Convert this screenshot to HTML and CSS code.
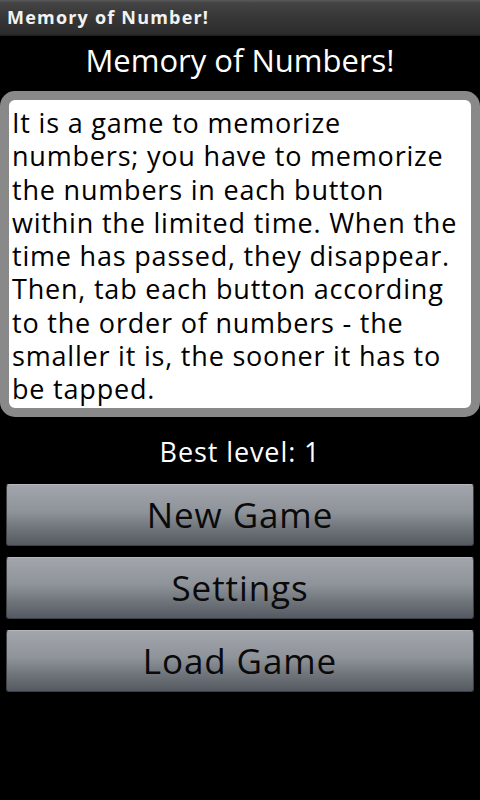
FILE: index.html
```html
<!DOCTYPE html>
<html>
<head>
    <title>Memory of Number!</title>
    <link rel="stylesheet" href="styles.css">
</head>
<body>
    <div class="titlebar">Memory of Number!</div>
    <div id="container">
        <h1 class="heading">Memory of Numbers!</h1>
        <div class="intro">
            <p>It is a game to memorize numbers; you have to memorize the numbers in each button within the limited time. When the time has passed, they disappear. Then, tab each button according to the order of numbers - the smaller it is, the sooner it has to be tapped.</p>
        </div>
        <p class="best">Best level: <span id="bestLevel">1</span></p>
        <div class="menu">
            <button class="menu-btn">New Game</button>
            <button class="menu-btn">Settings</button>
            <button class="menu-btn">Load Game</button>
        </div>
    </div>
</body>
</html>
```

FILE: styles.css
```css
body {
    margin: 0;
    background-color: #000;
    color: #fff;
    font-family: "Open Sans", "Noto Sans", sans-serif;
}

/* 窗口标题栏 */
.titlebar {
    height: 36px;
    padding-left: 7px;
    line-height: 35px;
    font-size: 18px;
    font-weight: bold;
    letter-spacing: 1.2px;
    color: #f2f2f2;
    background: linear-gradient(#5a5a5a 0, #434343 3px, #353535 20px, #2c2c2c 34px, #1a1a1a 36px);
}

.heading {
    margin: 0;
    height: 55px;
    line-height: 48px;
    font-size: 31px;
    font-weight: normal;
    text-align: center;
}

/* 说明文字框 */
.intro {
    background-color: #fff;
    border: 9px solid #898989;
    border-radius: 15px;
    padding: 6px 3px 2px 3px;
}

.intro p {
    margin: 0;
    color: #000;
    font-size: 27px;
    line-height: 33.3px;
    letter-spacing: 0.8px;
}

.best {
    margin: 0;
    height: 67px;
    line-height: 70px;
    font-size: 27px;
    letter-spacing: 0.9px;
    text-align: center;
}

.menu {
    display: flex;
    flex-direction: column;
    gap: 11px;
    padding: 0 6px;
}

.menu-btn {
    height: 62px;
    border: 1px solid #3c3f44;
    border-top-color: #b4b7bc;
    border-radius: 3px;
    background: linear-gradient(#a2a6ac, #8e9299 45%, #72767d 70%, #555a62);
    color: #0a0a0a;
    font-family: "Open Sans", "Noto Sans", sans-serif;
    font-size: 35px;
    letter-spacing: 0.9px;
    padding: 0;
    cursor: pointer;
}
```
